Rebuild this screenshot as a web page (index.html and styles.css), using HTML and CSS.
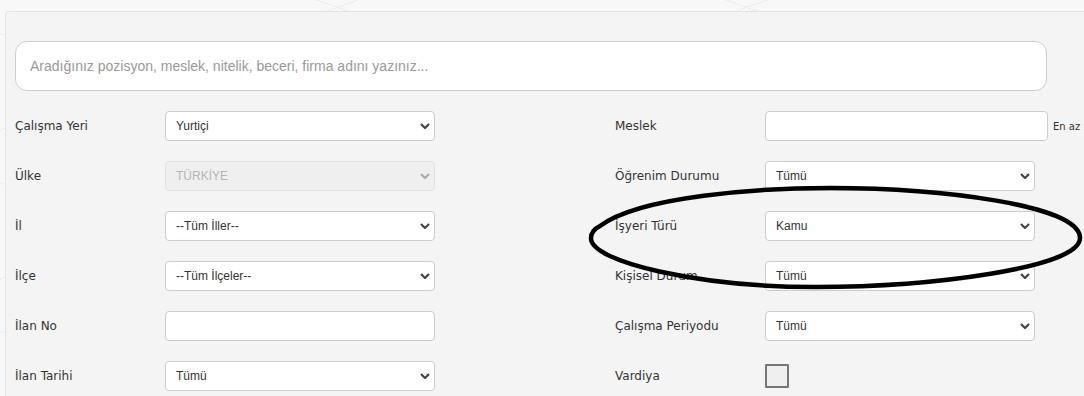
FILE: index.html
```html
<!DOCTYPE html>
<html lang="tr">
<head>
    <meta charset="UTF-8">
    <meta name="viewport" content="width=device-width, initial-scale=1.0">
    <title>İş Ara - Detaylı Arama</title>
    <link rel="stylesheet" href="styles.css">
</head>
<body>
    <div class="page">
        <div class="panel">
            <input class="search" type="text" placeholder="Aradığınız pozisyon, meslek, nitelik, beceri, firma adını yazınız...">

            <div class="filters">
                <!-- row 1 -->
                <div class="field">
                    <label>Çalışma Yeri</label>
                    <div class="select-wrap">
                        <select><option>Yurtiçi</option></select>
                        <svg class="chev" viewBox="0 0 10 6"><polyline points="1,1 5,5 9,1"/></svg>
                    </div>
                </div>
                <div class="field">
                    <label>Meslek</label>
                    <input class="text-input wide" type="text">
                    <span class="hint">En az</span>
                </div>

                <!-- row 2 -->
                <div class="field">
                    <label>Ülke</label>
                    <div class="select-wrap disabled">
                        <select disabled><option>TÜRKİYE</option></select>
                        <svg class="chev" viewBox="0 0 10 6"><polyline points="1,1 5,5 9,1"/></svg>
                    </div>
                </div>
                <div class="field">
                    <label>Öğrenim Durumu</label>
                    <div class="select-wrap">
                        <select><option>Tümü</option></select>
                        <svg class="chev" viewBox="0 0 10 6"><polyline points="1,1 5,5 9,1"/></svg>
                    </div>
                </div>

                <!-- row 3 -->
                <div class="field">
                    <label>İl</label>
                    <div class="select-wrap">
                        <select><option>--Tüm İller--</option></select>
                        <svg class="chev" viewBox="0 0 10 6"><polyline points="1,1 5,5 9,1"/></svg>
                    </div>
                </div>
                <div class="field">
                    <label>İşyeri Türü</label>
                    <div class="select-wrap">
                        <select><option>Kamu</option></select>
                        <svg class="chev" viewBox="0 0 10 6"><polyline points="1,1 5,5 9,1"/></svg>
                    </div>
                </div>

                <!-- row 4 -->
                <div class="field">
                    <label>İlçe</label>
                    <div class="select-wrap">
                        <select><option>--Tüm İlçeler--</option></select>
                        <svg class="chev" viewBox="0 0 10 6"><polyline points="1,1 5,5 9,1"/></svg>
                    </div>
                </div>
                <div class="field">
                    <label>Kişisel Durum</label>
                    <div class="select-wrap">
                        <select><option>Tümü</option></select>
                        <svg class="chev" viewBox="0 0 10 6"><polyline points="1,1 5,5 9,1"/></svg>
                    </div>
                </div>

                <!-- row 5 -->
                <div class="field">
                    <label>İlan No</label>
                    <input class="text-input" type="text">
                </div>
                <div class="field">
                    <label>Çalışma Periyodu</label>
                    <div class="select-wrap">
                        <select><option>Tümü</option></select>
                        <svg class="chev" viewBox="0 0 10 6"><polyline points="1,1 5,5 9,1"/></svg>
                    </div>
                </div>

                <!-- row 6 -->
                <div class="field">
                    <label>İlan Tarihi</label>
                    <div class="select-wrap">
                        <select><option>Tümü</option></select>
                        <svg class="chev" viewBox="0 0 10 6"><polyline points="1,1 5,5 9,1"/></svg>
                    </div>
                </div>
                <div class="field">
                    <label>Vardiya</label>
                    <input class="check" type="checkbox">
                </div>
            </div>
        </div>

        <!-- hand drawn mark around "İşyeri Türü" -->
        <svg class="mark" viewBox="0 0 1084 396">
            <path d="M 600 226 C 640 196, 760 188, 830 188 C 940 188, 1080 205, 1080 238 C 1080 268, 930 287, 815 287 C 700 287, 590 262, 591 238 C 591 232, 594 229, 600 226 Z"/>
        </svg>
    </div>
</body>
</html>
```

FILE: styles.css
```css
* {
    margin: 0;
    padding: 0;
    box-sizing: border-box;
}

html, body {
    width: 1084px;
    height: 396px;
    overflow: hidden;
}

body {
    font-family: "DejaVu Sans", Verdana, sans-serif;
    font-size: 12px;
    color: #333;
    background-color: #f8f8f8;
    background-image:
        repeating-linear-gradient(20deg, transparent 0 60px, #ececec 60px 61px, transparent 61px 140px),
        repeating-linear-gradient(-20deg, transparent 0 60px, #ececec 60px 61px, transparent 61px 140px);
}

.page {
    position: relative;
    padding: 11px 0 0 5px;
}

.panel {
    width: 1079px;
    height: 385px;
    overflow: hidden;
    background: #f4f4f4;
    border: 1px solid #e4e4e4;
    border-right: none;
    border-bottom: none;
    border-radius: 4px 0 0 0;
    padding: 29px 0 0 9px;
}

.search {
    display: block;
    width: 1032px;
    height: 50px;
    border: 1px solid #ccc;
    border-radius: 12px;
    background: #fff;
    padding: 0 14px;
    font-family: "Liberation Sans", Arial, sans-serif;
    font-size: 14px;
    color: #333;
    outline: none;
}

.search::placeholder {
    color: #999;
}

.filters {
    display: grid;
    grid-template-columns: 600px 470px;
    row-gap: 20px;
    margin-top: 20px;
}

.field {
    display: flex;
    align-items: center;
    height: 30px;
}

.field label {
    width: 150px;
    flex-shrink: 0;
}

.select-wrap {
    position: relative;
    width: 270px;
    height: 30px;
}

.select-wrap select {
    appearance: none;
    -webkit-appearance: none;
    width: 100%;
    height: 100%;
    border: 1px solid #ccc;
    border-radius: 4px;
    background: #fff;
    padding: 0 10px;
    font-family: "Liberation Sans", Arial, sans-serif;
    font-size: 12px;
    color: #333;
    outline: none;
}

.select-wrap.disabled select {
    background: #eee;
    border-color: #d9d9d9;
    color: #999;
}

.chev {
    position: absolute;
    right: 5px;
    top: 12px;
    width: 10px;
    height: 6px;
    fill: none;
    stroke: #444;
    stroke-width: 2.2;
    pointer-events: none;
}

.select-wrap.disabled .chev {
    stroke: #aaa;
}

.text-input {
    width: 270px;
    height: 30px;
    border: 1px solid #ccc;
    border-radius: 4px;
    background: #fff;
    outline: none;
}

.text-input.wide {
    width: 283px;
}

.hint {
    margin-left: 5px;
    font-size: 10px;
    white-space: nowrap;
}

.check {
    appearance: none;
    -webkit-appearance: none;
    width: 24px;
    height: 24px;
    border: 2px solid #767676;
    border-radius: 1px;
    background: #efefef;
}

.mark {
    position: absolute;
    left: 0;
    top: 0;
    width: 1084px;
    height: 396px;
    pointer-events: none;
    fill: none;
    stroke: #000;
    stroke-width: 4.5;
}
```
